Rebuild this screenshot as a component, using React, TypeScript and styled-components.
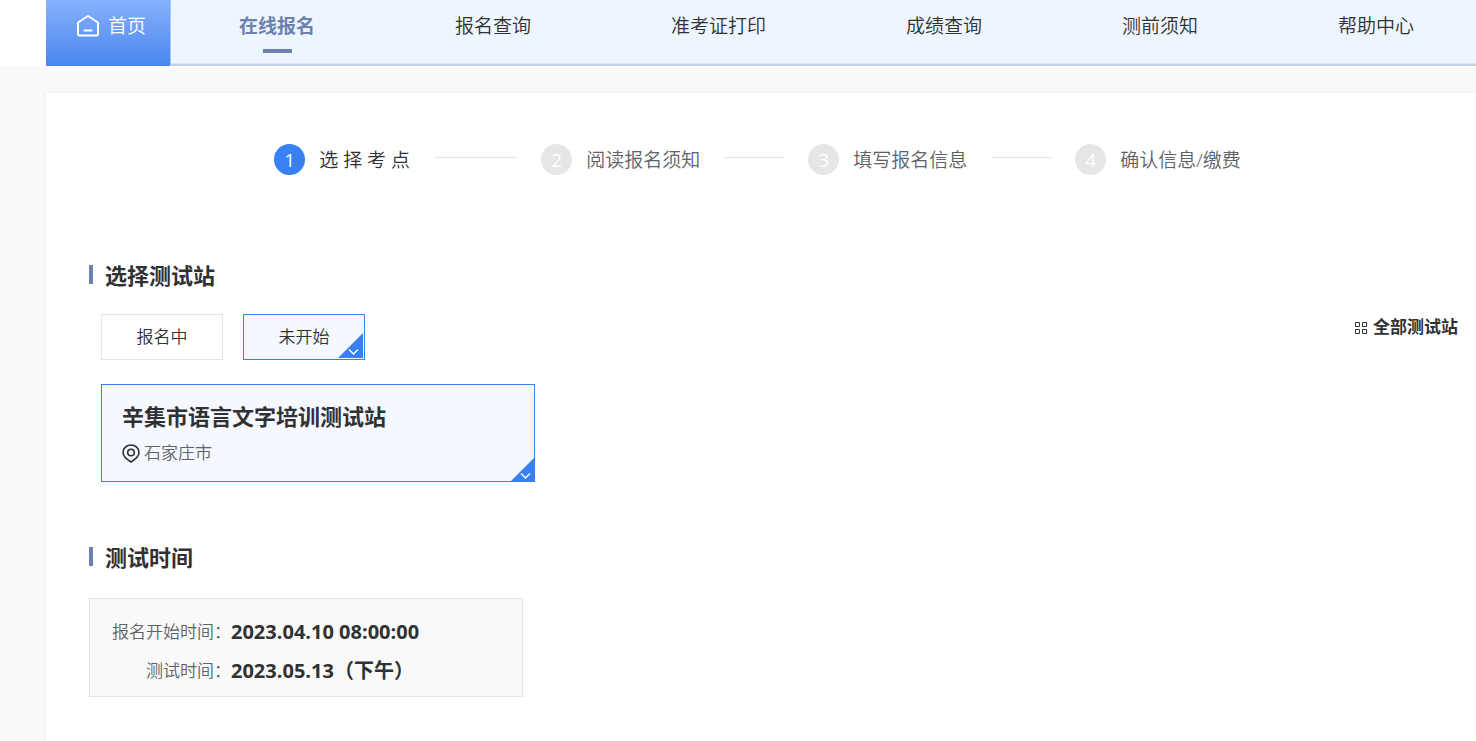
import React from "react";
import styled, { createGlobalStyle, css } from "styled-components";

const blue = "#3880f3";
const slate = "#6b82ad";
const ink = "#303133";
const muted = "#606266";
const line = "#e4e4e4";

const GlobalStyle = createGlobalStyle`
  * { box-sizing: border-box; }
  body {
    margin: 0;
    background: #f9f9f9;
    color: ${ink};
    font-family: "Open Sans", "Noto Sans CJK SC", sans-serif;
    font-size: 17px;
    font-weight: 350;
    line-height: 24px;
  }
  h2, h3, dl, dd, ol, ul { margin: 0; padding: 0; list-style: none; }
  button { font: inherit; color: inherit; }
`;

const Header = styled.header`
  background: #fff;
  padding-left: 46px;
`;

const Nav = styled.nav`
  display: flex;
  height: 66px;
  background: #edf5ff;
  overflow: hidden;
`;

const HomeLink = styled.a`
  display: flex;
  gap: 8px;
  flex: none;
  width: 125px;
  padding: 14px 0 0 30px;
  border-right: 1px solid #a9c6f8;
  background: linear-gradient(#86b1fd, #4a86ec);
  color: #fff;
  font-size: 19px;
  text-decoration: none;
`;

const NavList = styled.ul`
  display: flex;
  flex: 1;
  gap: 140px;
  padding: 14px 0 0 68px;
  border-bottom: 2px solid #c2d1e5;
  box-shadow: inset 0 -1px #dae6f5;
`;

const NavLink = styled.a<{ $active?: boolean }>`
  display: flex;
  flex-direction: column;
  align-items: center;
  gap: 11px;
  color: ${ink};
  font-size: 19px;
  white-space: nowrap;
  text-decoration: none;
  ${(p) =>
    p.$active &&
    css`
      color: ${slate};
      font-weight: 700;
      &::after {
        content: "";
        width: 29px;
        height: 4px;
        background: ${slate};
      }
    `}
`;

const Card = styled.main`
  margin: 27px 0 0 46px;
  padding: 51px 18px 44px 43px;
  min-height: calc(100vh - 93px);
  background: #fff;
  box-shadow: 0 0 6px rgba(0, 0, 0, 0.05);
`;

const Steps = styled.ol`
  display: flex;
  justify-content: center;
  padding-right: 32px;
`;

const Step = styled.li<{ $active?: boolean }>`
  display: flex;
  align-items: center;
  flex: 0 0 267px;
  color: ${(p) => (p.$active ? ink : muted)};
  font-size: 19px;
  white-space: nowrap;
  &:last-child {
    flex-basis: auto;
  }
  &:not(:last-child)::after {
    content: "";
    flex: 1;
    height: 1px;
    margin: 0 24px 4px;
    background: ${line};
  }
`;

const StepNumber = styled.span<{ $active?: boolean }>`
  display: grid;
  place-items: center;
  width: 31px;
  height: 31px;
  margin-right: 14px;
  border-radius: 50%;
  background: ${(p) => (p.$active ? blue : "#e6e6e6")};
  color: #fff;
  font-weight: 500;
`;

const SectionTitle = styled.h2`
  display: flex;
  align-items: center;
  gap: 12px;
  font-size: 22px;
  line-height: 30px;
  &::before {
    content: "";
    width: 4px;
    height: 19px;
    margin-bottom: 2px;
    background: ${slate};
  }
`;

const StationSection = styled.section`
  margin-top: 85px;
`;

const TimeSection = styled.section`
  margin-top: 60px;
`;

const FilterBar = styled.div`
  display: flex;
  justify-content: space-between;
  align-items: flex-start;
  margin: 24px 0;
  padding-left: 12px;
`;

const Chips = styled.div`
  display: flex;
  gap: 20px;
`;

const Chip = styled.button<{ $selected?: boolean }>`
  position: relative;
  width: 122px;
  height: 46px;
  padding: 0;
  border: 1px solid ${(p) => (p.$selected ? blue : line)};
  background: ${(p) => (p.$selected ? "#f5f8ff" : "#fff")};
`;

const AllStations = styled.button`
  display: flex;
  align-items: center;
  gap: 5px;
  padding: 1px 0 0;
  border: 0;
  background: none;
  font-weight: 700;
`;

const StationCard = styled.button`
  position: relative;
  display: block;
  width: 434px;
  height: 98px;
  margin-left: 12px;
  padding: 0 20px;
  border: 1px solid ${blue};
  background: #f5f8ff;
  text-align: left;
`;

const StationName = styled.strong`
  display: block;
  font-size: 22px;
  font-weight: 700;
  line-height: 30px;
`;

const Place = styled.span`
  display: flex;
  align-items: center;
  gap: 4px;
  margin-top: 10px;
  color: ${muted};
`;

const CornerSvg = styled.svg<{ $inset: number }>`
  position: absolute;
  right: ${(p) => p.$inset}px;
  bottom: ${(p) => p.$inset}px;
`;

const Times = styled.dl`
  display: grid;
  grid-template-columns: auto 1fr;
  row-gap: 15px;
  width: 434px;
  margin-top: 26px;
  padding: 21px 20px 13px 22px;
  border: 1px solid ${line};
  background: #f9f9f9;
`;

const TimeLabel = styled.dt`
  color: ${muted};
  text-align: right;
  white-space: nowrap;
`;

const TimeValue = styled.dd`
  font-size: 20px;
  font-weight: 700;
`;

const HomeIcon = () => (
  <svg width="24" height="24" viewBox="0 0 24 24" fill="none" stroke="#fff" strokeWidth="2" strokeLinejoin="round" strokeLinecap="round">
    <path d="M2 8.5 12 2l10 6.500V20q0 1.500-1.500 1.500h-17Q2 21.500 2 20Z" />
    <path d="M8.500 16.500h7" />
  </svg>
);

const GridIcon = () => (
  <svg width="13" height="13" viewBox="0 0 13 13" fill="none" stroke={ink}>
    <path d="M.5 1.500h4v4h-4zM7.500 1.500h4v4h-4zM.5 8.500h4v4h-4zM7.500 8.500h4v4h-4z" />
  </svg>
);

const PinIcon = () => (
  <svg width="18" height="19" viewBox="0 0 18 19" fill="none" stroke={ink} strokeWidth="1.6" strokeLinejoin="round">
    <path d="M9 18C5 15.500 1 12.500 1 8.500a8 7.500 0 0 1 16 0C17 12.500 13 15.500 9 18Z" />
    <circle cx="9" cy="8.500" r="3.300" />
  </svg>
);

const Corner = ({ inset }: { inset: number }) => (
  <CornerSvg $inset={inset} width="25" height="25" viewBox="0 0 25 25" aria-hidden="true">
    <path d="M25 0v25H0z" fill={blue} />
    <path d="m11 16.500 4.500 4.500L20 16.500" fill="none" stroke="#fff" strokeWidth="1.300" />
  </CornerSvg>
);

const links = ["在线报名", "报名查询", "准考证打印", "成绩查询", "测前须知", "帮助中心"];
const steps = ["选 择 考 点", "阅读报名须知", "填写报名信息", "确认信息/缴费"];

export default function App() {
  return (
    <>
      <GlobalStyle />
      <Header>
        <Nav>
          <HomeLink href="#home">
            <HomeIcon />
            首页
          </HomeLink>
          <NavList>
            {links.map((label, i) => (
              <li key={label}>
                <NavLink href={`#nav-${i}`} $active={i === 0}>
                  {label}
                </NavLink>
              </li>
            ))}
          </NavList>
        </Nav>
      </Header>
      <Card>
        <Steps>
          {steps.map((label, i) => (
            <Step key={label} $active={i === 0}>
              <StepNumber $active={i === 0}>{i + 1}</StepNumber>
              {label}
            </Step>
          ))}
        </Steps>
        <StationSection>
          <SectionTitle>选择测试站</SectionTitle>
          <FilterBar>
            <Chips>
              <Chip type="button">报名中</Chip>
              <Chip type="button" $selected aria-pressed="true">
                未开始
                <Corner inset={1} />
              </Chip>
            </Chips>
            <AllStations type="button">
              <GridIcon />
              全部测试站
            </AllStations>
          </FilterBar>
          <StationCard type="button" aria-pressed="true">
            <StationName>辛集市语言文字培训测试站</StationName>
            <Place>
              <PinIcon />
              石家庄市
            </Place>
            <Corner inset={-1} />
          </StationCard>
        </StationSection>
        <TimeSection>
          <SectionTitle>测试时间</SectionTitle>
          <Times>
            <TimeLabel>报名开始时间：</TimeLabel>
            <TimeValue>2023.04.10 08:00:00</TimeValue>
            <TimeLabel>测试时间：</TimeLabel>
            <TimeValue>2023.05.13（下午）</TimeValue>
          </Times>
        </TimeSection>
      </Card>
    </>
  );
}
